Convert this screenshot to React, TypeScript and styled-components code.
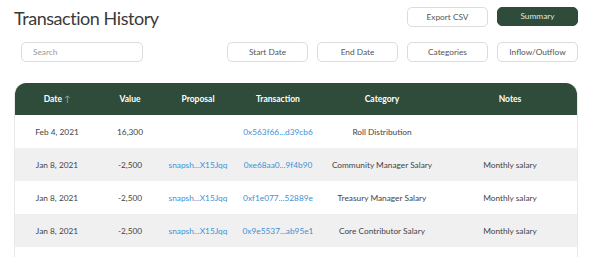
import React from "react";
import styled, { createGlobalStyle } from "styled-components";

const Global = createGlobalStyle`
  html, body { margin: 0; padding: 0; background: #fff; }
  body { font-family: Lato, "Open Sans", Arial, sans-serif; color: #333; }
  * { box-sizing: border-box; }
`;

const Page = styled.div`
  width: 600px;
  height: 257px;
  overflow: hidden;
  padding: 7px 22px 0 14px;
`;

const TopBar = styled.div`
  display: flex;
  align-items: center;
  justify-content: space-between;
  height: 19px;
`;

const Title = styled.h1`
  margin: 0;
  font-size: 18px;
  font-weight: 400;
  color: #3a3a3a;
  letter-spacing: -0.45px;
  line-height: 19px;
  position: relative;
  top: 2px;
`;

const Actions = styled.div`
  display: flex;
  gap: 9px;
`;

const Button = styled.button<{ $primary?: boolean }>`
  width: 81px;
  height: ${(p) => (p.$primary ? "19px" : "20px")};
  border-radius: 5px;
  border: 1px solid ${(p) => (p.$primary ? "#2f4b3a" : "#dcdcdc")};
  background: ${(p) => (p.$primary ? "#2f4b3a" : "#fff")};
  color: ${(p) => (p.$primary ? "#dfe8e1" : "#555")};
  font-family: Lato, Arial, sans-serif;
  font-size: 8.3px;
  padding: 0;
  cursor: pointer;
`;

const FilterRow = styled.div`
  display: flex;
  align-items: center;
  justify-content: space-between;
  margin-top: 16px;
  padding-left: 7px;
`;

const Search = styled.input`
  width: 122px;
  height: 20px;
  border: 1px solid #dcdcdc;
  border-radius: 5px;
  padding: 0 11px;
  font-family: Lato, Arial, sans-serif;
  font-size: 8.3px;
  color: #555;
  outline: none;
  &::placeholder { color: #9a9a9a; }
`;

const Filters = styled.div`
  display: flex;
  gap: 9px;
`;

const TableWrap = styled.div`
  margin-top: 21px;
  width: 564px;
  border-left: 1px solid #e8e8e8;
  border-right: 1px solid #e8e8e8;
  border-radius: 12px 12px 0 0;
  overflow: hidden;
`;

const Table = styled.table`
  width: 100%;
  border-collapse: collapse;
  table-layout: fixed;
  font-size: 8.3px;
`;

const Th = styled.th<{ $w: number }>`
  width: ${(p) => p.$w}px;
  height: 32px;
  background: #2f4b3a;
  color: #fff;
  font-weight: 700;
  font-size: 8.5px;
  text-align: center;
  padding: 0;
`;

const Arrow = styled.span`
  color: #9fb0a5;
  font-weight: 400;
  margin-left: 2px;
`;

const Tr = styled.tr<{ $alt?: boolean }>`
  background: ${(p) => (p.$alt ? "#f0f0f0" : "#fff")};
`;

const Td = styled.td`
  height: 33px;
  padding: 0;
  text-align: center;
  color: #444;
  white-space: nowrap;
`;

const Link = styled.a`
  color: #4191d4;
  text-decoration: none;
`;

const cols = [
  { label: "Date", w: 84, arrow: true },
  { label: "Value", w: 62 },
  { label: "Proposal", w: 74 },
  { label: "Transaction", w: 86 },
  { label: "Category", w: 122 },
  { label: "Notes", w: 134 },
];

const rows = [
  { date: "Feb 4, 2021", value: "16,300", proposal: "", tx: "0x563f66...d39cb6", cat: "Roll Distribution", notes: "" },
  { date: "Jan 8, 2021", value: "-2,500", proposal: "snapsh...X15Jqq", tx: "0xe68aa0...9f4b90", cat: "Community Manager Salary", notes: "Monthly salary" },
  { date: "Jan 8, 2021", value: "-2,500", proposal: "snapsh...X15Jqq", tx: "0xf1e077...52889e", cat: "Treasury Manager Salary", notes: "Monthly salary" },
  { date: "Jan 8, 2021", value: "-2,500", proposal: "snapsh...X15Jqq", tx: "0x9e5537...ab95e1", cat: "Core Contributor Salary", notes: "Monthly salary" },
  { date: "", value: "", proposal: "", tx: "", cat: "", notes: "" },
];

export default function App() {
  return (
    <>
      <Global />
      <Page>
        <TopBar>
          <Title>Transaction History</Title>
          <Actions>
            <Button>Export CSV</Button>
            <Button $primary>Summary</Button>
          </Actions>
        </TopBar>
        <FilterRow>
          <Search placeholder="Search" />
          <Filters>
            <Button>Start Date</Button>
            <Button>End Date</Button>
            <Button>Categories</Button>
            <Button>Inflow/Outflow</Button>
          </Filters>
        </FilterRow>
        <TableWrap>
          <Table>
            <thead>
              <tr>
                {cols.map((c) => (
                  <Th key={c.label} $w={c.w}>
                    {c.label}
                    {c.arrow && <Arrow>↑</Arrow>}
                  </Th>
                ))}
              </tr>
            </thead>
            <tbody>
              {rows.map((r, i) => (
                <Tr key={i} $alt={i % 2 === 1}>
                  <Td>{r.date}</Td>
                  <Td>{r.value}</Td>
                  <Td>{r.proposal && <Link href="#">{r.proposal}</Link>}</Td>
                  <Td>{r.tx && <Link href="#">{r.tx}</Link>}</Td>
                  <Td>{r.cat}</Td>
                  <Td>{r.notes}</Td>
                </Tr>
              ))}
            </tbody>
          </Table>
        </TableWrap>
      </Page>
    </>
  );
}
